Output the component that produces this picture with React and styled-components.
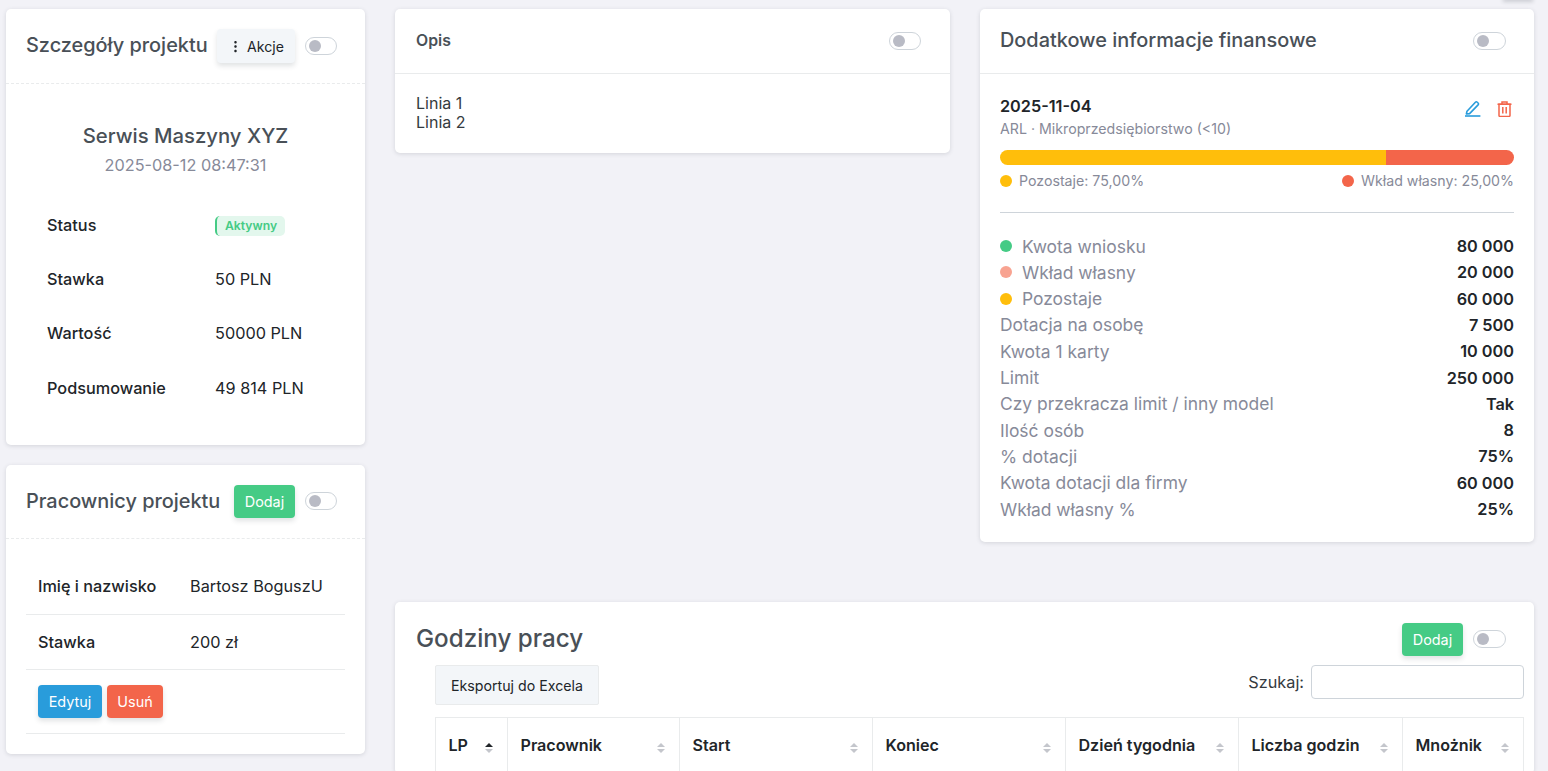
import React from 'react'
import styled, { createGlobalStyle } from 'styled-components'
import { RiMore2Fill } from 'react-icons/ri'

const GlobalStyle = createGlobalStyle`
  html, body { margin: 0; padding: 0; height: 771px; overflow: hidden; background: #f2f2f7; }
  body { font-family: Inter, "Noto Sans", sans-serif; color: #212529; }
  * { box-sizing: border-box; }
`

const Page = styled.div`
  display: grid;
  grid-template-columns: 359px 1139px;
  column-gap: 30px;
  padding: 9px 14px 0 6px;
  height: 771px;
  overflow: hidden;
`

// bottom edge of a button that is scrolled away above the visible part of the page
const ScrolledButton = styled.div`
  position: fixed;
  top: -34px;
  left: 1503px;
  width: 30px;
  height: 34px;
  background: #f3f6f9;
  box-shadow: 0 2px 4px rgba(56, 65, 74, 0.2);
`

const Column = styled.div`
  display: flex;
  flex-direction: column;
  gap: 20px;
`

const Main = styled.div`
  display: flex;
  flex-direction: column;
  gap: 60px;
`

const TopRow = styled.div`
  display: grid;
  grid-template-columns: 555px 554px;
  column-gap: 30px;
  align-items: start;
`

const Card = styled.section`
  background: #fff;
  border-radius: 5px;
  box-shadow: 0 1px 4px rgba(56, 65, 74, 0.16);
`

const Header = styled.header`
  display: flex;
  align-items: center;
  height: ${p => p.$height || 65}px;
  padding: 0 ${p => p.$right || 28}px 0 ${p => p.$left || 20}px;
  gap: 10px;
  border-bottom: ${p => (p.$plain ? 'none' : `1px ${p.$dashed ? 'dashed' : 'solid'} #e9ebec`)};
`

const Title = styled.h2`
  margin: 0;
  padding-bottom: 2px;
  flex: 1;
  min-width: 0;
  font-size: 19.9px;
  font-weight: 500;
  color: #495057;
  white-space: nowrap;
`

const LowTitle = styled(Title)`
  padding-bottom: 0;
`

const SmallTitle = styled(Title)`
  font-size: 15.8px;
  font-weight: 600;
`

const BigTitle = styled(Title)`
  font-size: 24.2px;
  padding-bottom: 1px;
`

const Toggle = styled.span`
  display: block;
  flex: none;
  width: ${p => (p.$wide ? 33 : 32)}px;
  height: 18px;
  border: 1px solid #ced4da;
  border-radius: 9px;
  background: #fff;
  padding: 2px 0 0 3px;
  &::before {
    content: '';
    display: block;
    width: 12px;
    height: 12px;
    border-radius: 50%;
    background: #b9bbc5;
  }
`

const Button = styled.button`
  display: inline-flex;
  align-items: center;
  justify-content: center;
  flex: none;
  height: 33px;
  width: ${p => p.$width}px;
  padding: 0;
  border: none;
  border-radius: 4px;
  font: 400 14.4px Inter, sans-serif;
  color: #fff;
  background: ${p => p.$color};
  box-shadow: 0 3px 5px rgba(56, 65, 74, 0.15);
`

const ActionsButton = styled(Button)`
  width: 78px;
  height: 34px;
  gap: 4px;
  margin-left: -1px;
  font-size: 14.1px;
  color: #212529;
  background: #f3f6f9;
`

const DetailBody = styled.div`
  padding: 40px 20px 30px;
`

const ProjectName = styled.div`
  text-align: center;
  font-size: 20.3px;
  font-weight: 500;
  line-height: 24px;
  color: #495057;
`

const ProjectDate = styled.div`
  text-align: center;
  font-size: 16.25px;
  line-height: 24px;
  margin-top: 5px;
  color: #878a99;
`

const DetailList = styled.div`
  margin-top: 21px;
  padding-left: 21px;
`

const DetailRow = styled.div`
  display: grid;
  grid-template-columns: 168px 1fr;
  align-items: center;
  height: 54.2px;
  font-size: 16.25px;
  color: #212529;
`

const DetailLabel = styled.span`
  font-weight: 500;
`

const Badge = styled.span`
  display: inline-block;
  height: 20px;
  line-height: 20px;
  padding: 0 8px 0 8px;
  font-size: 12.2px;
  font-weight: 600;
  color: #45cb85;
  background: #e3f7ed;
  border-left: 2px solid #45cb85;
  border-radius: 5px;
`

const WorkersBody = styled.div`
  padding: 20px;
`

const WorkerRow = styled.div`
  display: grid;
  grid-template-columns: 152px 1fr;
  align-items: center;
  height: ${p => p.$height}px;
  padding: 0 12px;
  font-size: 16.25px;
  border-bottom: 1px solid #e9ebec;
`

const WorkerActions = styled.div`
  display: flex;
  align-items: center;
  gap: 5px;
  height: 64px;
  padding: 0 12px;
  border-bottom: 1px solid #e9ebec;
`

const TextBody = styled.div`
  padding: 20px 21px;
  font-size: 16px;
  line-height: 19px;
  color: #343a40;
  height: 79px;
`

const FinanceBody = styled.div`
  padding: 20px;
`

const EntryHead = styled.div`
  display: flex;
  justify-content: space-between;
  align-items: flex-start;
`

const EntryDate = styled.div`
  font-size: 16.25px;
  font-weight: 600;
  line-height: 24px;
  color: #212529;
`

const EntryMeta = styled.div`
  font-size: 14.2px;
  line-height: 20px;
  margin-top: 1px;
  color: #878a99;
`

const EntryIcons = styled.div`
  display: flex;
  align-items: center;
  gap: 16px;
  margin: 6px 2px 0 0;
`

const Bar = styled.div`
  display: flex;
  height: 15px;
  margin-top: 11px;
  border-radius: 8px;
  overflow: hidden;
`

const BarPart = styled.div`
  background: ${p => p.$color};
`

const Legend = styled.div`
  display: flex;
  justify-content: space-between;
  margin-top: 6px;
  padding-bottom: 21px;
  font-size: 14.2px;
  line-height: 20px;
  color: #878a99;
  border-bottom: 1px solid #ced4da;
`

const LegendItem = styled.span`
  display: inline-flex;
  align-items: center;
  gap: 7px;
`

const Dot = styled.span`
  flex: none;
  width: 12px;
  height: 12px;
  border-radius: 50%;
  background: ${p => p.$color};
`

const StatList = styled.div`
  margin-top: 19.9px;
`

const StatRow = styled.div`
  display: flex;
  justify-content: space-between;
  align-items: center;
  height: 26.3px;
  font-size: 17.45px;
  color: #878a99;
`

const StatLabel = styled.span`
  display: inline-flex;
  align-items: center;
  gap: 10px;
`

const StatValue = styled.span`
  font-size: 16.25px;
  font-weight: 600;
  color: #212529;
`

const HoursTools = styled.div`
  display: flex;
  justify-content: space-between;
  align-items: flex-start;
  padding: 0 10px 0 40px;
  margin-top: -11px;
`

const ExportButton = styled.button`
  height: 40px;
  padding: 0 15px;
  font: 400 14.2px Inter, sans-serif;
  color: #212529;
  background: #f3f6f9;
  border: 1px solid #e9ebec;
  border-radius: 2px;
`

const SearchLabel = styled.label`
  display: flex;
  align-items: center;
  gap: 7px;
  font-size: 16.25px;
  color: #343a40;
`

const SearchInput = styled.input`
  width: 213px;
  height: 34px;
  border: 1px solid #ced4da;
  border-radius: 4px;
  background: #fff;
`

const TableWrap = styled.div`
  padding: 12px 10px 0 40px;
`

const Table = styled.table`
  width: 1088px;
  table-layout: fixed;
  border-collapse: collapse;
`

const Th = styled.th`
  width: ${p => p.$width}px;
  height: 56px;
  padding: 0 14px 2px 12.5px;
  border: 1px solid #e9ebec;
  border-bottom: none;
  font-size: 16.1px;
  font-weight: 600;
  text-align: left;
  color: #212529;
`

const ThInner = styled.div`
  display: flex;
  justify-content: space-between;
  align-items: center;
`

const Arrows = styled.span`
  display: flex;
  flex-direction: column;
  gap: 2px;
  margin-top: 7px;
`

const Arrow = styled.span`
  width: 0;
  height: 0;
  border-left: 4px solid transparent;
  border-right: 4px solid transparent;
  ${p => (p.$down ? 'border-top' : 'border-bottom')}: 4px solid ${p => (p.$active ? '#212529' : '#c4c6cc')};
`

const EditIcon = () => (
  <svg width='17' height='17' viewBox='0 0 17 17' fill='none' stroke='#299cdb' strokeWidth='1.6'>
    <path d='M3 11.2 11.4 2.2a1.3 1.3 0 0 1 1.9 0l.8.8a1.3 1.3 0 0 1 0 1.9L5.6 13.6l-3.2.4z' strokeLinejoin='round' />
    <path d='M1 16h15.4' strokeWidth='1.6' />
  </svg>
)

const TrashIcon = () => (
  <svg width='15' height='16' viewBox='0 0 15 16' fill='none' stroke='#f3654a' strokeWidth='1.5'>
    <path d='M0.5 3.2h14M5 3V1h5v2' />
    <path d='M2 3.2h11v11.2a1 1 0 0 1-1 1H3a1 1 0 0 1-1-1z' />
    <path d='M5.8 6v6.5M9.2 6v6.5' />
  </svg>
)

const details = [
  ['Stawka', '50 PLN'],
  ['Wartość', '50000 PLN'],
  ['Podsumowanie', '49 814 PLN']
]

const stats = [
  ['Kwota wniosku', '80 000', '#45cb85'],
  ['Wkład własny', '20 000', '#f8a391'],
  ['Pozostaje', '60 000', '#ffbe0b'],
  ['Dotacja na osobę', '7 500'],
  ['Kwota 1 karty', '10 000'],
  ['Limit', '250 000'],
  ['Czy przekracza limit / inny model', 'Tak'],
  ['Ilość osób', '8'],
  ['% dotacji', '75%'],
  ['Kwota dotacji dla firmy', '60 000'],
  ['Wkład własny %', '25%']
]

const columns = [
  ['LP', 72],
  ['Pracownik', 172],
  ['Start', 193],
  ['Koniec', 193],
  ['Dzień tygodnia', 173],
  ['Liczba godzin', 164],
  ['Mnożnik', 121]
]

const App = () => (
  <>
    <GlobalStyle />
    <ScrolledButton />
    <Page>
      <Column>
        <Card>
          <Header $height={75} $dashed>
            <Title>Szczegóły projektu</Title>
            <ActionsButton><RiMore2Fill size={15} />Akcje</ActionsButton>
            <Toggle />
          </Header>
          <DetailBody>
            <ProjectName>Serwis Maszyny XYZ</ProjectName>
            <ProjectDate>2025-08-12 08:47:31</ProjectDate>
            <DetailList>
              <DetailRow>
                <DetailLabel>Status</DetailLabel>
                <span><Badge>Aktywny</Badge></span>
              </DetailRow>
              {details.map(([label, value]) => (
                <DetailRow key={label}>
                  <DetailLabel>{label}</DetailLabel>
                  <span>{value}</span>
                </DetailRow>
              ))}
            </DetailList>
          </DetailBody>
        </Card>
        <Card>
          <Header $height={74} $dashed>
            <LowTitle>Pracownicy projektu</LowTitle>
            <Button $color='#45cb85' $width={61}>Dodaj</Button>
            <Toggle />
          </Header>
          <WorkersBody>
            <WorkerRow $height={56}>
              <DetailLabel>Imię i nazwisko</DetailLabel>
              <span>Bartosz BoguszU</span>
            </WorkerRow>
            <WorkerRow $height={55}>
              <DetailLabel>Stawka</DetailLabel>
              <span>200 zł</span>
            </WorkerRow>
            <WorkerActions>
              <Button $color='#299cdb' $width={64}>Edytuj</Button>
              <Button $color='#f3654a' $width={56}>Usuń</Button>
            </WorkerActions>
          </WorkersBody>
        </Card>
      </Column>
      <Main>
        <TopRow>
          <Card>
            <Header $left={21} $right={29}>
              <SmallTitle>Opis</SmallTitle>
              <Toggle />
            </Header>
            <TextBody>
              Linia 1<br />
              Linia 2
            </TextBody>
          </Card>
          <Card>
            <Header>
              <Title>Dodatkowe informacje finansowe</Title>
              <Toggle $wide />
            </Header>
            <FinanceBody>
              <EntryHead>
                <div>
                  <EntryDate>2025-11-04</EntryDate>
                  <EntryMeta>ARL · Mikroprzedsiębiorstwo (&lt;10)</EntryMeta>
                </div>
                <EntryIcons>
                  <EditIcon />
                  <TrashIcon />
                </EntryIcons>
              </EntryHead>
              <Bar>
                <BarPart $color='#ffbe0b' style={{ width: '75%' }} />
                <BarPart $color='#f3654a' style={{ width: '25%' }} />
              </Bar>
              <Legend>
                <LegendItem><Dot $color='#ffbe0b' />Pozostaje: 75,00%</LegendItem>
                <LegendItem><Dot $color='#f3654a' />Wkład własny: 25,00%</LegendItem>
              </Legend>
              <StatList>
                {stats.map(([label, value, color]) => (
                  <StatRow key={label}>
                    <StatLabel>{color && <Dot $color={color} />}{label}</StatLabel>
                    <StatValue>{value}</StatValue>
                  </StatRow>
                ))}
              </StatList>
            </FinanceBody>
          </Card>
        </TopRow>
        <Card>
          <Header $height={74} $plain $left={21}>
            <BigTitle>Godziny pracy</BigTitle>
            <Button $color='#45cb85' $width={61}>Dodaj</Button>
            <Toggle $wide />
          </Header>
          <HoursTools>
            <ExportButton>Eksportuj do Excela</ExportButton>
            <SearchLabel>Szukaj: <SearchInput /></SearchLabel>
          </HoursTools>
          <TableWrap>
            <Table>
              <thead>
                <tr>
                  {columns.map(([name, width], i) => (
                    <Th key={name} $width={width}>
                      <ThInner>
                        {name}
                        <Arrows>
                          <Arrow $active={i === 0} />
                          <Arrow $down />
                        </Arrows>
                      </ThInner>
                    </Th>
                  ))}
                </tr>
              </thead>
            </Table>
          </TableWrap>
        </Card>
      </Main>
    </Page>
  </>
)

export default App
